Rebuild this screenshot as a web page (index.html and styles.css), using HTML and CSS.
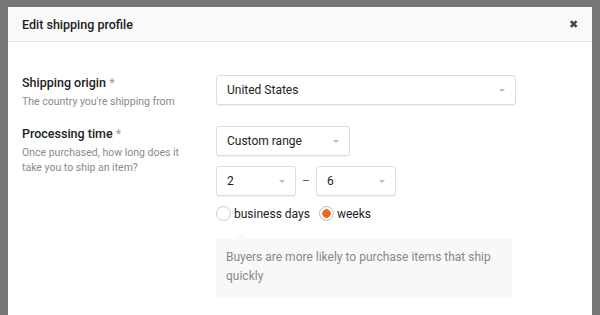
FILE: index.html
```html
<!DOCTYPE html>
<html>
<head>
    <title>Edit shipping profile</title>
    <link rel="stylesheet" href="styles.css">
</head>
<body>
    <div class="backdrop">
        <div class="modal">
            <div class="modal-header">
                <h2>Edit shipping profile</h2>
                <span class="close">&#x2716;</span>
            </div>
            <div class="modal-body">
                <div class="row">
                    <div class="label-col">
                        <div class="label">Shipping origin <span class="req">*</span></div>
                        <div class="hint">The country you're shipping from</div>
                    </div>
                    <div class="field-col">
                        <div class="select wide">United States<span class="caret"></span></div>
                    </div>
                </div>
                <div class="row">
                    <div class="label-col">
                        <div class="label">Processing time <span class="req">*</span></div>
                        <div class="hint">Once purchased, how long does it take you to ship an item?</div>
                    </div>
                    <div class="field-col">
                        <div class="select range">Custom range<span class="caret"></span></div>
                        <div class="range-row">
                            <div class="select small">2<span class="caret"></span></div>
                            <span class="dash">&ndash;</span>
                            <div class="select small">6<span class="caret"></span></div>
                        </div>
                        <div class="radios">
                            <label class="radio"><span class="dot"></span>business days</label>
                            <label class="radio checked"><span class="dot"></span>weeks</label>
                        </div>
                        <div class="tip">Buyers are more likely to purchase items that ship quickly</div>
                    </div>
                </div>
            </div>
        </div>
    </div>
</body>
</html>
```

FILE: styles.css
```css
html, body {
    margin: 0;
    height: 100%;
    overflow: hidden;
}

body {
    background-color: #767676;
    font-family: Roboto, "Open Sans", sans-serif;
    color: #222;
}

.backdrop {
    padding: 7px 8px 0 8px;
    height: 100%;
    box-sizing: border-box;
}

.modal {
    background-color: #fff;
    height: 100%;
    width: 584px;
}

.modal-header {
    display: flex;
    align-items: center;
    justify-content: space-between;
    height: 34px;
    padding: 0 14px;
    background-color: #f9f9f9;
    border-bottom: 1px solid #e6e6e6;
}

.modal-header h2 {
    margin: 0;
    font-size: 12.5px;
    font-weight: 500;
}

.close {
    font-size: 11px;
    color: #444;
}

.modal-body {
    padding: 33px 14px 0 14px;
}

.row {
    display: flex;
    margin-bottom: 17px;
}

.label-col {
    width: 194px;
}

.label {
    font-size: 12.5px;
    font-weight: 500;
    line-height: 16px;
}

.req {
    color: #999;
    font-weight: 400;
}

.hint {
    margin-top: 3px;
    font-size: 10.5px;
    line-height: 15px;
    color: #8a8a8a;
    width: 165px;
}

.field-col {
    flex: 1;
}

.select {
    position: relative;
    box-sizing: border-box;
    height: 30px;
    padding: 0 10px;
    line-height: 28px;
    font-size: 12px;
    border: 1px solid #dcdcdc;
    border-radius: 3px;
    box-shadow: 0 1px 1px rgba(0, 0, 0, 0.06);
}

.wide {
    width: 300px;
}

.range {
    width: 134px;
}

.small {
    width: 80px;
}

.caret {
    position: absolute;
    right: 10px;
    top: 13px;
    border-left: 3px solid transparent;
    border-right: 3px solid transparent;
    border-top: 3px solid #bbb;
}

.range-row {
    display: flex;
    align-items: center;
    margin-top: 10px;
}

.dash {
    width: 20px;
    text-align: center;
    font-size: 12px;
    color: #666;
}

.radios {
    display: flex;
    gap: 9px;
    margin-top: 10px;
    font-size: 12px;
}

.radio {
    display: flex;
    align-items: center;
    gap: 3px;
}

.dot {
    box-sizing: border-box;
    width: 15px;
    height: 15px;
    border: 1px solid #ccc;
    border-radius: 50%;
    background: #fff;
}

.checked .dot {
    border-color: #bbb;
    background: radial-gradient(circle, #f1641e 0 4px, #fff 4.5px);
}

.tip {
    position: relative;
    margin-top: 18px;
    width: 296px;
    box-sizing: border-box;
    padding: 9px 10px 12px 10px;
    background-color: #f8f8f8;
    font-size: 12px;
    line-height: 19px;
    color: #888;
}

.tip::before {
    content: "";
    position: absolute;
    left: 20px;
    top: -6px;
    border-left: 6px solid transparent;
    border-right: 6px solid transparent;
    border-bottom: 6px solid #f8f8f8;
}
```
